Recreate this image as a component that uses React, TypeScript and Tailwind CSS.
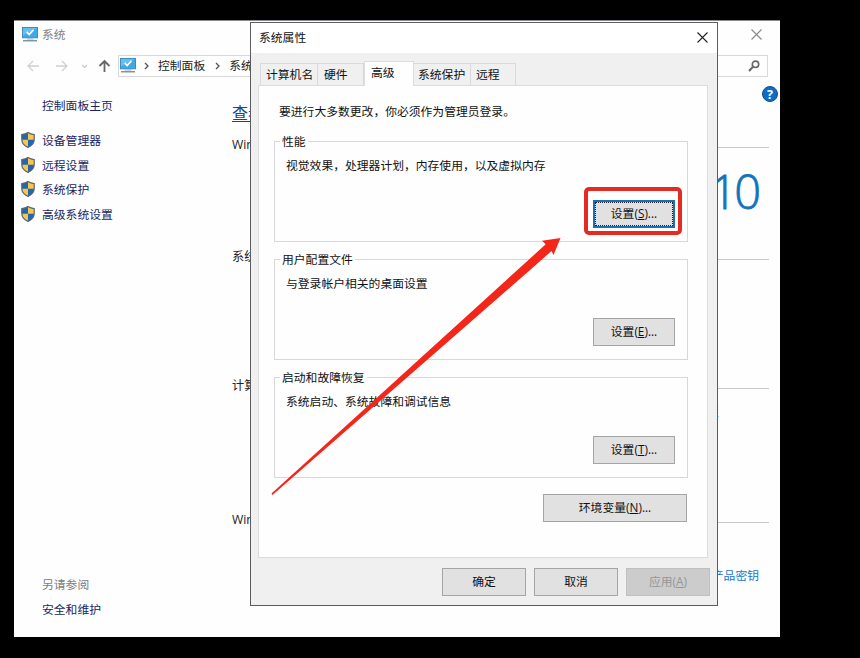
import { ReactNode } from "react"

const MonitorIcon = () => (
    <svg className="shrink-0" width="16" height="15" viewBox="0 0 17 16">
        <rect x="0.5" y="0.5" width="16" height="11" fill="#3fa9e8" stroke="#3f86b4" />
        <path d="M1 1h15L1 9z" fill="#63c0f2" />
        <path d="M5 5.2l2.6 2.8 4.6-5" fill="none" stroke="#fff" strokeWidth="1.8" />
        <path d="M5 12.8h7" stroke="#8fb3c8" strokeWidth="1" />
        <path d="M1 14.7h15" stroke="#5d8299" strokeWidth="1.3" />
    </svg>
)

const ShieldIcon = () => (
    <svg className="shrink-0" width="14" height="16" viewBox="0 0 14 16">
        <path d="M7 .6C5 2 3 2.5.8 2.6v5C.8 11.5 3.5 14 7 15.4z" fill="#1f66b5" />
        <path d="M7 .6c2 1.4 4 1.9 6.2 2v5c0 3.9-2.7 6.4-6.2 7.8z" fill="#f7c64a" />
        <path d="M.8 7.8H7v7.6C3.5 14 1 11.6.8 7.8z" fill="#f7c64a" />
        <path d="M7 7.8h6.2C13 11.6 10.5 14 7 15.4z" fill="#1f66b5" />
        <path d="M7 .6C5 2 3 2.5.8 2.6v5C.8 11.5 3.5 14 7 15.4c3.5-1.4 6.2-3.9 6.2-7.8v-5C11 2.5 9 2 7 .6z" fill="none" stroke="#5b6470" strokeWidth="1.2" />
    </svg>
)

const CloseIcon = ({ color }: { color: string }) => (
    <svg className="shrink-0" width="11" height="11" viewBox="0 0 11 11">
        <path d="M.5.5l10 10M10.5.5l-10 10" stroke={color} strokeWidth="1.1" />
    </svg>
)

const Chevron = () => (
    <svg className="shrink-0" width="5" height="8" viewBox="0 0 5 8">
        <path d="M1 1l3 3-3 3" fill="none" stroke="#555" strokeWidth="1.3" />
    </svg>
)

const tasks = ["设备管理器", "远程设置", "系统保护", "高级系统设置"]

const Section = ({ title, className, children }: { title: string; className: string; children?: ReactNode }) => (
    <section className={className}>
        <div className="flex h-4 items-center gap-2">
            <span className="mt-[2px]">{title}</span>
            <span className="mt-1.5 h-px flex-1 bg-[#c9c9cc]"></span>
        </div>
        {children}
    </section>
)

const SystemWindow = () => (
    <div className="absolute left-[14px] top-[20px] flex h-[617px] w-[766px] flex-col border-t border-[#8a8a8c] bg-[#fefefe]">
        <header className="flex h-[27px] items-center pl-2 pr-[18px]">
            <MonitorIcon />
            <span className="-mt-px ml-[4px] flex-1 text-[#808080]">系统</span>
            <CloseIcon color="#888" />
        </header>
        <div className="mt-[7px] flex h-[22px] items-center pl-[13px] pr-[12px]">
            <svg className="shrink-0" width="84" height="14" viewBox="0 0 84 14" fill="none">
                <path d="M12 7H1M6 2L1 7l5 5" stroke="#d0d0d0" strokeWidth="1.3" />
                <path d="M29 7h11M35 2l5 5-5 5" stroke="#d0d0d0" strokeWidth="1.3" />
                <path d="M55 6l2.5 2.5L60 6" stroke="#c8c8c8" strokeWidth="1.2" />
                <path d="M77.5 13V2M72.5 7l5-5 5 5" stroke="#666" strokeWidth="1.8" />
            </svg>
            <div className="ml-[7px] flex h-[22px] flex-1 items-center border border-[#d9d9d9] pl-px pr-[7px] text-[#222]">
                <span className="-mt-[2px]"><MonitorIcon /></span>
                <div className="ml-[8px] flex flex-1 items-center">
                    <Chevron />
                    <span className="-mt-[2px] ml-[9px] mr-[10px]">控制面板</span>
                    <Chevron />
                    <span className="-mt-[2px] ml-[9px]">系统</span>
                </div>
                <svg width="12" height="12" viewBox="0 0 12 12" fill="none" stroke="#666">
                    <circle cx="7.5" cy="4.3" r="3.2" strokeWidth="1.6" />
                    <path d="M5 6.8L1 11" strokeWidth="2" />
                </svg>
            </div>
        </div>
        <div className="flex flex-1">
            <aside className="flex w-[218px] flex-col pl-[7px] text-[#1b1f63]">
                <a className="ml-[21px] mt-[20px] h-4">控制面板主页</a>
                <ul className="mt-[15px]">
                    {tasks.map((task) => (
                        <li key={task} className="flex h-[24.5px] items-center gap-[7px]">
                            <ShieldIcon />
                            <span>{task}</span>
                        </li>
                    ))}
                </ul>
                <div className="mb-[20px] ml-[21px] mt-auto">
                    <p className="h-[25px] text-[#7d7d7d]">另请参阅</p>
                    <a className="block h-4">安全和维护</a>
                </div>
            </aside>
            <main className="flex-1 pr-[11px] text-[12.2px] text-[#222]">
                <div className="mr-[-9px] flex items-start justify-between">
                    <h1 className="mt-[26px] h-5 text-base leading-5 text-[#0f4796] underline underline-offset-2">查看</h1>
                    <svg className="mt-[9px]" width="16" height="16" viewBox="0 0 16 16">
                        <circle cx="8" cy="8" r="7.5" fill="#0f6cc4" stroke="#0b4f94" />
                        <text x="8" y="12.5" textAnchor="middle" fontSize="12.5" fontWeight="700" fill="#fff">?</text>
                    </svg>
                </div>
                <Section title="Win" className="mt-[13px] h-[112px]">
                    <p className="mr-[11px] mt-[7px] text-right text-[47px] font-light leading-[64px] tracking-[-3px] text-[#1173bd] [-webkit-text-stroke:0.8px_#1173bd]">10</p>
                </Section>
                <Section title="系统" className="h-[129px]" />
                <Section title="计算" className="h-[134px]">
                    <p className="mr-[50px] mt-[11px] text-right text-[#218c8c]">置</p>
                </Section>
                <Section title="Win" className="">
                    <p className="mr-[10px] mt-[40px] text-right text-[11.8px] text-[#1976c8]">产品密钥</p>
                </Section>
            </main>
        </div>
    </div>
)

const tabs = [
    { name: "计算机名", style: "w-[58px] pl-[5px]" },
    { name: "硬件", style: "w-[46px] pl-[6px]" },
    { name: "高级", style: "w-[50px] pl-[6px]", active: true },
    { name: "系统保护", style: "w-[57px] pl-[4px]" },
    { name: "远程", style: "w-[45px] pl-[5px]" },
]

const groups = [
    { legend: "性能", text: "视觉效果，处理器计划，内存使用，以及虚拟内存", hotkey: "S", focused: true },
    { legend: "用户配置文件", text: "与登录帐户相关的桌面设置", hotkey: "E" },
    { legend: "启动和故障恢复", text: "系统启动、系统故障和调试信息", hotkey: "T" },
]

const Hotkey = ({ label, letter, dots = true }: { label: string; letter: string; dots?: boolean }) => (
    <span>
        {label}(<span className="underline underline-offset-1">{letter}</span>){dots && "..."}
    </span>
)

const button = "flex h-[28px] items-center justify-center border border-[#a5a5a7] bg-[#e1e1e2] pb-[2px]"

const PropertiesDialog = () => (
    <div className="absolute left-[250px] top-[22px] flex h-[584px] w-[468px] flex-col border border-[#5c5c60] bg-[#f0f0f1]">
        <header className="flex h-[30px] items-center justify-between bg-white pb-[2px] pl-[8px] pr-[9px]">
            <span>系统属性</span>
            <CloseIcon color="#222" />
        </header>
        <div className="ml-[9px] mt-[8px] flex h-[24px] items-end">
            {tabs.map((tab) =>
                tab.active ? (
                    <div key={tab.name} className={`${tab.style} relative top-px h-[25px] border border-b-0 border-[#dcdcde] bg-[#fefefe] pt-[2px]`}>{tab.name}</div>
                ) : (
                    <div key={tab.name} className={`${tab.style} h-[22px] border-r border-t border-[#d9d9db] pt-[2px] first:border-l`}>{tab.name}</div>
                )
            )}
        </div>
        <div className="ml-[7px] flex h-[473px] w-[450px] flex-col border border-[#dcdcde] bg-[#fefefe] pl-[15px] pr-[19px]">
            <p className="ml-[5px] mt-[17px] h-4">要进行大多数更改，你必须作为管理员登录。</p>
            <div className="mt-[14px]">
                {groups.map((group) => (
                    <fieldset key={group.legend} className="mb-[9px] h-[109px] border border-[#d8d8dc] pl-[11px] pr-[12px]">
                        <legend className="-ml-[6px] h-4 px-[2px]">{group.legend}</legend>
                        <p className="mt-[8px] h-4">{group.text}</p>
                        <div className="mt-[27px] flex justify-end">
                            {group.focused ? (
                                <button className="relative h-[28px] w-[82px] border-2 border-[#1a6fb8] bg-[#e1e1e2]">
                                    <span className="flex h-full items-center justify-center border border-dotted border-[#222] pb-[2px]">
                                        <Hotkey label="设置" letter={group.hotkey} />
                                    </span>
                                    <span className="absolute -bottom-[9px] -left-[11px] -right-[9px] -top-[15px] rounded-[5px] border-4 border-[#e52a22]"></span>
                                </button>
                            ) : (
                                <button className={`${button} w-[82px]`}>
                                    <Hotkey label="设置" letter={group.hotkey} />
                                </button>
                            )}
                        </div>
                    </fieldset>
                ))}
            </div>
            <button className={`${button} ml-auto mr-px mt-[7px] w-[144px]`}>
                <Hotkey label="环境变量" letter="N" />
            </button>
        </div>
        <footer className="mt-[10px] flex justify-end gap-[8px] pr-[7px]">
            <button className={`${button} w-[84px]`}>确定</button>
            <button className={`${button} w-[84px]`}>取消</button>
            <button className="flex h-[28px] w-[84px] items-center justify-center border border-[#c0c0c2] bg-[#cccccd] pb-[2px] text-[#959597]">
                <Hotkey label="应用" letter="A" dots={false} />
            </button>
        </footer>
    </div>
)

const App = () => {
    return (
        <div className="relative h-[658px] w-[860px] overflow-hidden bg-black font-['Open_Sans','Noto_Sans_CJK_SC',sans-serif] text-[11.8px] leading-4 text-[#111]">
            <SystemWindow />
            <PropertiesDialog />
            <svg className="absolute left-[270px] top-[236px]" width="292" height="260" viewBox="270 236 292 260">
                <path d="M271.5 493.5L545.7 244.3l-3.7-3.6L560.5 238 553.5 255l-2-4L529.5 270.5 272.5 495z" fill="#f4261a" />
            </svg>
        </div>
    )
}

export default App
